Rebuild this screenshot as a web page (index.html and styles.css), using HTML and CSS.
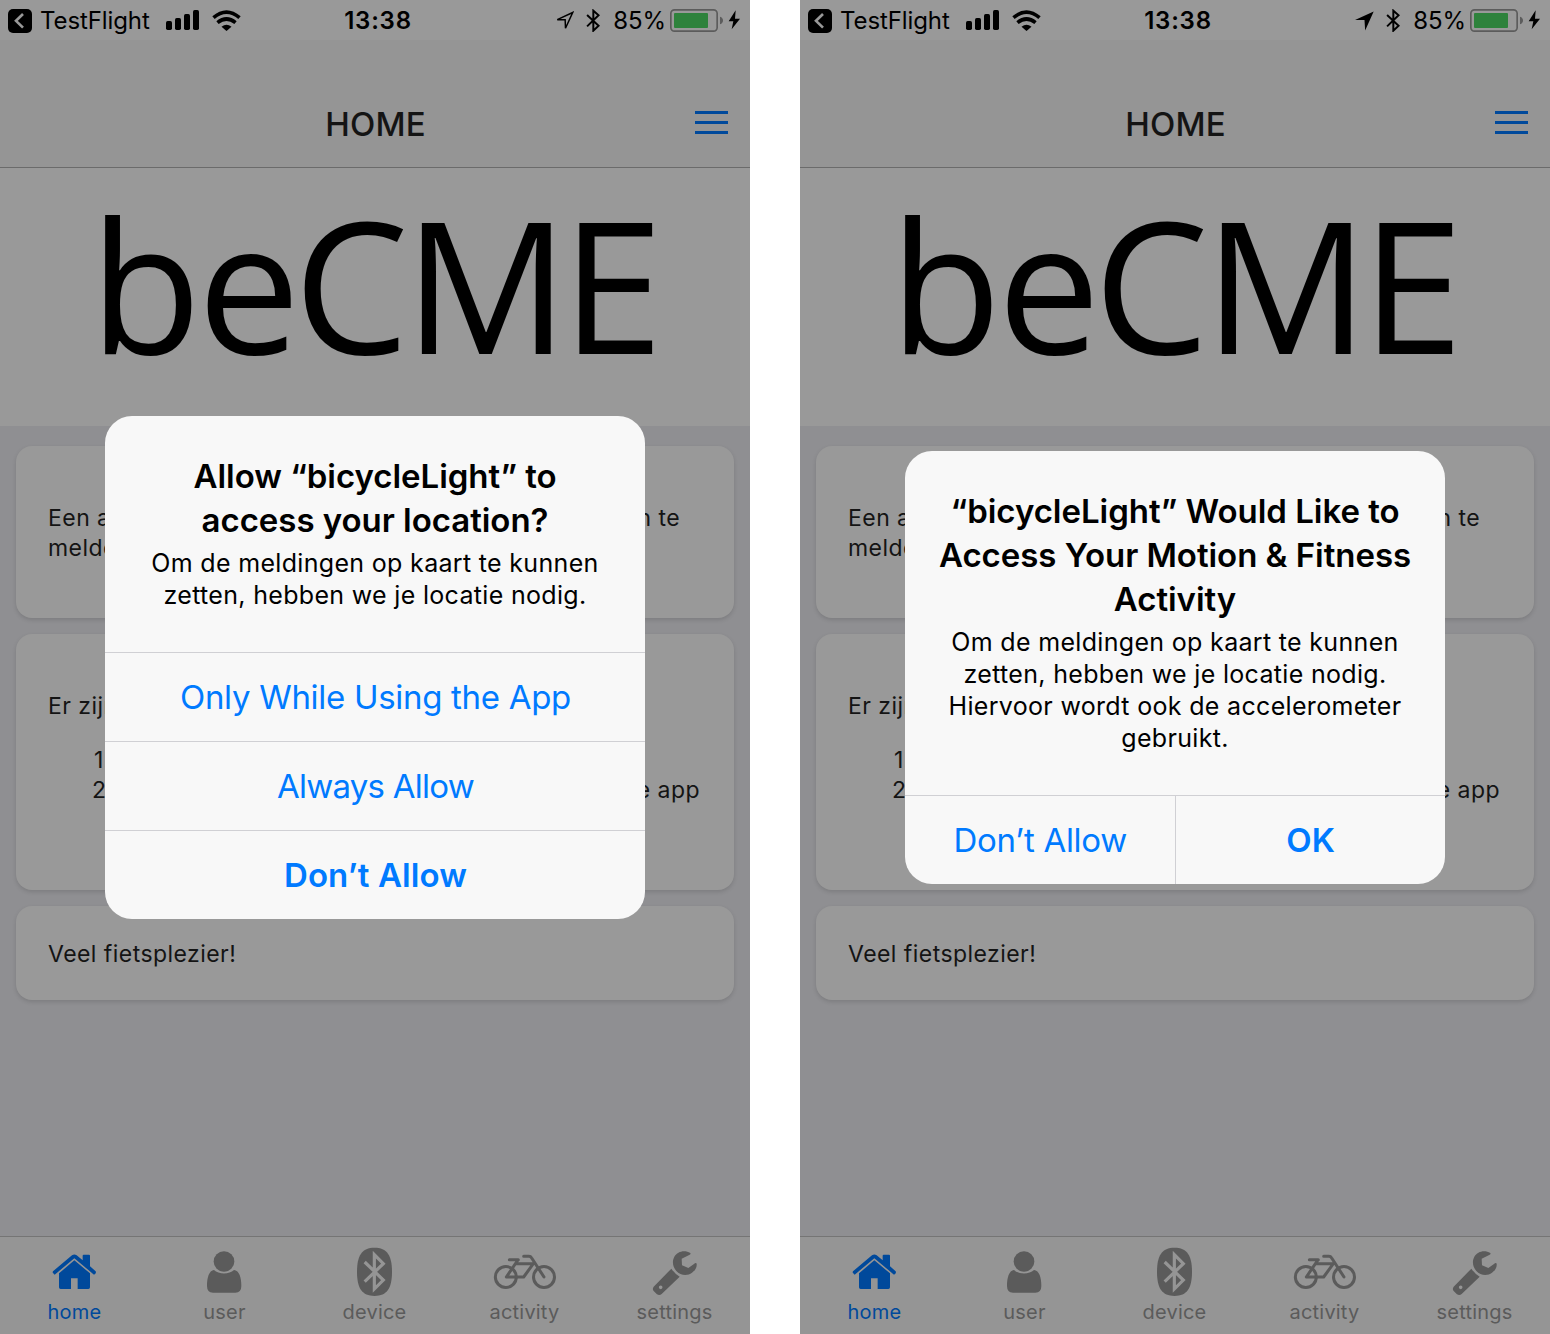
FILE: index.html
```html
<!DOCTYPE html>
<html lang="nl">
<head>
<meta charset="utf-8">
<title>bicycleLight</title>
<link rel="stylesheet" href="styles.css">
</head>
<body>
<svg class="defs" width="0" height="0">
  <symbol id="back" viewBox="24 27 72 72"><rect x="24" y="27" width="72" height="72" rx="15"/><path d="M69 42 48 62.500 69 83" fill="none" stroke="#999" stroke-width="8"/></symbol>
  <symbol id="signal" viewBox="498 30 99 60"><rect x="498" y="63" width="18" height="27" rx="5"/><rect x="525" y="54" width="18" height="36" rx="5"/><rect x="552" y="42" width="18" height="48" rx="5"/><rect x="579" y="30" width="18" height="60" rx="5"/></symbol>
  <symbol id="wifi" viewBox="638 28 86 63"><path d="M642 51Q681 18 720 51M654 66Q681 44 708 66" fill="none" stroke="currentColor" stroke-width="11"/><path d="M666 78Q681 66 696 78L681 91Z"/></symbol>
  <symbol id="arrow-outline" viewBox="540 33 58 60"><path d="M594 37 547 59H571L572 85Z" fill="none" stroke="currentColor" stroke-width="4.500"/></symbol>
  <symbol id="arrow-solid" viewBox="540 33 58 60"><path d="M597 34 540 60H569L571 92Z"/></symbol>
  <symbol id="bt" viewBox="632 25 42 70"><path d="M635 43 670 76 654 91V30L670 44 635 78" fill="none" stroke="currentColor" stroke-width="6"/></symbol>
  <symbol id="battery" viewBox="885 27 213 72"><rect x="887.500" y="29.500" width="139" height="64" rx="11" fill="none" stroke="#5c5c5c" stroke-width="5"/><rect x="897" y="39" width="102" height="45" rx="3" fill="#2e823c"/><path d="M1035 50Q1044 53 1044 61.500T1035 73Z" fill="#5c5c5c"/><path d="M1082 31 1061 64H1075L1070 88 1095 56H1080Z"/></symbol>
  <symbol id="home" viewBox="117 48 216 168"><path d="M159 139 216 91Q223 86 230 91L248 106V92Q248 89 251 89H267Q270 89 270 92V124L287 139Q289 142 286 146L282 149 223 100 164 149 159 144Q157 142 159 139Z"/><path d="M223 106 270 145V187Q270 192 265 192H233V160H213V192H182Q177 192 177 187V145Z"/></symbol>
  <symbol id="user" viewBox="567 48 216 168"><circle cx="672" cy="109.500" r="31"/><path d="M642 135C656 149 688 149 702 135C718 137 724 158 724 183Q724 203 706 203H639Q621 203 621 183C621 158 627 137 642 135Z"/></symbol>
  <symbol id="device" viewBox="1017 48 216 168"><path d="M1123.500 68C1161 68 1176 91 1176 140.500S1161 213 1123.500 213 1071 190 1071 140.500 1086 68 1123.500 68Z"/><path d="M1094 111 1150 165 1123 192V89L1150 116 1094 170" fill="none" stroke="#959595" stroke-width="9.500"/></symbol>
  <symbol id="bike" viewBox="342 48 216 168"><g fill="none" stroke="currentColor" stroke-width="9" stroke-linecap="round" stroke-linejoin="round"><circle cx="392.500" cy="156" r="31.500"/><circle cx="507" cy="156" r="31.500"/><path d="M403 104H430M428 106 394 156H446L475 116H424M446 94H462Q467 94 470 99L507 156"/></g></symbol>
  <symbol id="wrench" viewBox="792 48 216 168"><path d="M946 84C929 73 907 79 898 95C890 110 894 127 904 138C916 151 937 154 951 143C962 135 966 126 965 116C964 113 960 114 957 117L940 129 921 121 920 101 944 89Q948 87 946 84Z"/><path fill-rule="evenodd" d="M889 131 Q900 147 914 155L860 207Q853 213 845 207L836 198Q831 192 836 185ZM857 181.500A5.500 5.500 0 1 0 857 192.500A5.500 5.500 0 1 0 857 181.500Z"/></symbol>
</svg>

<main class="screen">
  <header class="status">
    <div class="status-left"><svg class="i-back"><use href="#back"/></svg><span>TestFlight</span><svg class="i-signal"><use href="#signal"/></svg><svg class="i-wifi"><use href="#wifi"/></svg></div>
    <div class="time">13:38</div>
    <div class="status-right"><svg class="i-arrow"><use href="#arrow-outline"/></svg><svg class="i-bt"><use href="#bt"/></svg><span>85%</span><svg class="i-battery"><use href="#battery"/></svg></div>
  </header>
  <nav class="navbar"><h1>HOME</h1><div class="menu"><i></i><i></i><i></i></div></nav>
  <section class="hero"><svg class="logo" viewBox="0 0 750 258"><text y="185.500" x="89.500 197.500 293.500 404 561.500">beCME</text></svg></section>
  <section class="content">
    <article class="card card-intro"><p class="split"><span>Een app</span><span>aan te</span></p><p>melden</p></article>
    <article class="card card-list"><p>Er zijn</p><div class="list"><p class="first">1.</p><p class="split"><span>2.</span><span>de app</span></p></div></article>
    <article class="card card-end"><p>Veel fietsplezier!</p></article>
  </section>
  <footer class="tabs">
    <div class="tab active"><svg><use href="#home"/></svg><span>home</span></div>
    <div class="tab"><svg><use href="#user"/></svg><span>user</span></div>
    <div class="tab"><svg><use href="#device"/></svg><span>device</span></div>
    <div class="tab"><svg><use href="#bike"/></svg><span>activity</span></div>
    <div class="tab"><svg><use href="#wrench"/></svg><span>settings</span></div>
  </footer>
  <div class="overlay">
    <div class="dialog">
      <div class="message"><h2>Allow “bicycleLight” to<br>access your location?</h2><p>Om de meldingen op kaart te kunnen<br>zetten, hebben we je locatie nodig.</p></div>
      <div class="actions stacked"><button>Only While Using the App</button><button class="tight">Always Allow</button><button class="strong">Don’t Allow</button></div>
    </div>
  </div>
</main>

<main class="screen">
  <header class="status">
    <div class="status-left"><svg class="i-back"><use href="#back"/></svg><span>TestFlight</span><svg class="i-signal"><use href="#signal"/></svg><svg class="i-wifi"><use href="#wifi"/></svg></div>
    <div class="time">13:38</div>
    <div class="status-right"><svg class="i-arrow"><use href="#arrow-solid"/></svg><svg class="i-bt"><use href="#bt"/></svg><span>85%</span><svg class="i-battery"><use href="#battery"/></svg></div>
  </header>
  <nav class="navbar"><h1>HOME</h1><div class="menu"><i></i><i></i><i></i></div></nav>
  <section class="hero"><svg class="logo" viewBox="0 0 750 258"><text y="185.500" x="89.500 197.500 293.500 404 561.500">beCME</text></svg></section>
  <section class="content">
    <article class="card card-intro"><p class="split"><span>Een app</span><span>aan te</span></p><p>melden</p></article>
    <article class="card card-list"><p>Er zijn</p><div class="list"><p class="first">1.</p><p class="split"><span>2.</span><span>de app</span></p></div></article>
    <article class="card card-end"><p>Veel fietsplezier!</p></article>
  </section>
  <footer class="tabs">
    <div class="tab active"><svg><use href="#home"/></svg><span>home</span></div>
    <div class="tab"><svg><use href="#user"/></svg><span>user</span></div>
    <div class="tab"><svg><use href="#device"/></svg><span>device</span></div>
    <div class="tab"><svg><use href="#bike"/></svg><span>activity</span></div>
    <div class="tab"><svg><use href="#wrench"/></svg><span>settings</span></div>
  </footer>
  <div class="overlay">
    <div class="dialog">
      <div class="message"><h2>“bicycleLight” Would Like to<br>Access Your Motion &amp; Fitness<br>Activity</h2><p>Om de meldingen op kaart te kunnen<br>zetten, hebben we je locatie nodig.<br>Hiervoor wordt ook de accelerometer<br>gebruikt.</p></div>
      <div class="actions"><button>Don’t Allow</button><button class="strong">OK</button></div>
    </div>
  </div>
</main>
</body>
</html>
```
FILE: styles.css
```css
* { box-sizing: border-box; margin: 0; padding: 0; }
body {
  display: flex;
  gap: 50px;
  width: 1550px;
  height: 1334px;
  overflow: hidden;
  background: #fff;
  font-family: "Inter", "Liberation Sans", sans-serif;
  white-space: nowrap;
}
svg { display: block; flex: none; fill: currentColor; }
.defs { position: absolute; }

.screen {
  position: relative;
  display: flex;
  flex-direction: column;
  width: 750px;
  height: 1334px;
  overflow: hidden;
  background: #8f8f92;
  color: #141414;
}

/* Status bar */
.status {
  display: grid;
  grid-template-columns: 1fr auto 1fr;
  align-items: center;
  height: 40px;
  padding: 0 9px 0 8px;
  background: #999;
  color: #000;
  font-size: 24px;
  line-height: 42px;
}
.status-left, .status-right { display: flex; align-items: center; height: 40px; }
.status-right { justify-content: flex-end; }
.status span { display: block; height: 40px; letter-spacing: -.1px; }
.time { height: 40px; font-weight: 600; letter-spacing: .8px; padding-left: 7px; }
.i-back { width: 24px; height: 24px; margin: 2px 8px 0 0; }
.i-signal { width: 33px; height: 20px; margin-left: 16px; }
.i-wifi { width: 29px; height: 21px; margin-left: 13px; }
.i-arrow { width: 19px; height: 20px; margin: 1px 12px 0 0; }
.i-bt { width: 14px; height: 23px; margin-right: 13px; }
.i-battery { width: 71px; height: 24px; margin: 2px 0 0 4px; }

/* Navigation bar */
.navbar {
  position: relative;
  display: flex;
  justify-content: center;
  height: 128px;
  padding: 64px 0 0 1px;
  background: #959595;
  border-bottom: 1px solid #6b6b6b;
}
.navbar h1 { font-size: 33px; line-height: 40px; font-weight: 450; letter-spacing: .2px; }
.menu {
  position: absolute;
  right: 22px;
  top: 71px;
  display: flex;
  flex-direction: column;
  gap: 7px;
  width: 33px;
}
.menu i { height: 3px; background: #00499b; }

.hero { height: 258px; background: #999; }
.logo { width: 750px; height: 258px; overflow: visible; fill: #000; font-family: "Open Sans", "Noto Sans", sans-serif; font-size: 183px; }

/* Cards */
.content {
  display: flex;
  flex: 1;
  flex-direction: column;
  gap: 16px;
  padding: 20px 16px;
  font-size: 23px;
  line-height: 30px;
  letter-spacing: .45px;
}
.card {
  padding: 0 34px 0 32px;
  border-radius: 16px;
  background: #999;
  box-shadow: 0 2px 4px rgba(0, 0, 0, .13);
}
.card-intro { height: 172px; padding-top: 57px; padding-right: 54px; }
.card-list { height: 256px; padding-top: 57px; }
.card-end { height: 94px; padding-top: 33px; }
.list { padding: 24px 0 0 44px; }
.first { padding-left: 2px; }
.split { display: flex; justify-content: space-between; }

/* Tab bar */
.tabs {
  display: flex;
  height: 98px;
  background: #959595;
  border-top: 1px solid #757575;
  color: #5b5b5b;
}
.tab {
  display: flex;
  flex: 1;
  flex-direction: column;
  align-items: center;
  padding-top: 4px;
  font-size: 20px;
  line-height: 30px;
  letter-spacing: .2px;
}
.tab svg { width: 72px; height: 56px; }
.tab span { margin-right: 1px; }
.active { color: #00499b; }

/* Permission dialog */
.overlay {
  position: absolute;
  inset: 0;
  display: flex;
  align-items: center;
  justify-content: center;
}
.dialog {
  width: 540px;
  overflow: hidden;
  border-radius: 27px;
  background: #f8f8f8;
  color: #000;
  text-align: center;
}
.message { padding: 38px 0 41px; }
.message h2 { font-size: 33px; line-height: 44px; font-weight: 600; letter-spacing: -.04px; }
.message p { padding-top: 5px; font-size: 25px; line-height: 32px; letter-spacing: .32px; }
.actions { display: flex; border-top: 1px solid #d0d0d4; }
.actions button {
  flex: 1;
  height: 88px;
  padding-left: 1px;
  border: 0;
  background: none;
  color: #007aff;
  font: 400 33px/88px "Inter", "Liberation Sans", sans-serif;
  letter-spacing: -.3px;
}
.actions button + button { border-left: 1px solid #d0d0d4; }
.stacked { flex-direction: column; }
.stacked button { flex: none; }
.stacked button + button { height: 89px; border-left: 0; border-top: 1px solid #d0d0d4; }
.actions .tight { letter-spacing: -.75px; }
.actions .strong { font-weight: 600; letter-spacing: .1px; }
```
